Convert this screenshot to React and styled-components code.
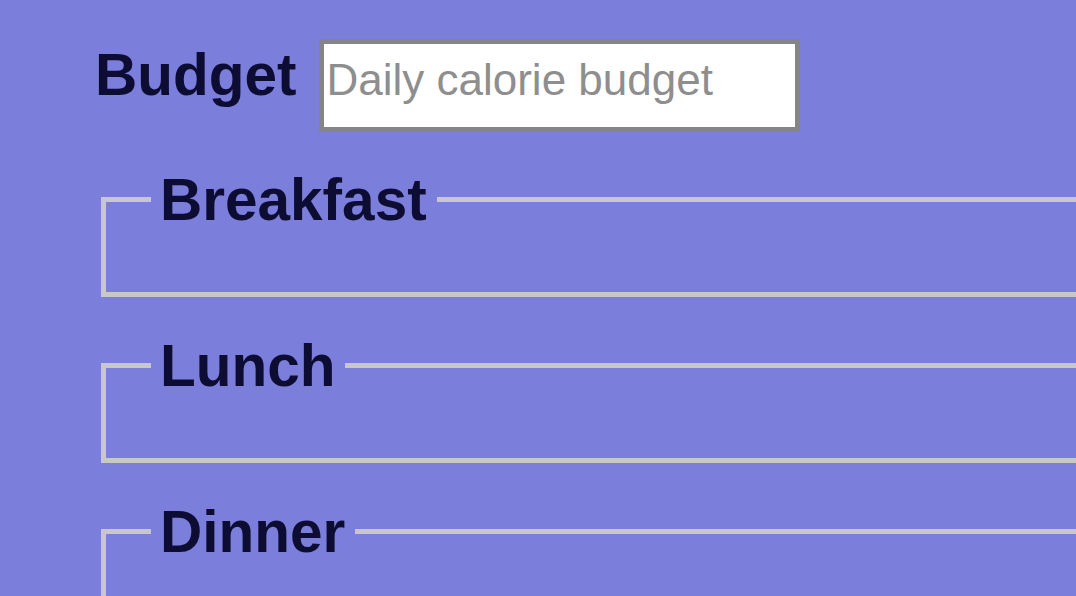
import styled, { createGlobalStyle } from 'styled-components';

const GlobalStyle = createGlobalStyle`
  html, body {
    margin: 0;
    padding: 0;
    background: #7b7edb;
    overflow: hidden;
  }
  body {
    font-family: "Liberation Sans", Arial, sans-serif;
    color: #0d0d33;
  }
`;

const Page = styled.div`
  padding: 39px 0 0 91px;
  width: 1300px;
`;

const BudgetRow = styled.div`
  display: flex;
  align-items: baseline;
  gap: 23px;
  margin-bottom: 34px;
`;

const Label = styled.label`
  margin-left: 4px;
  font-size: 58.5px;
  font-weight: bold;
`;

const BudgetInput = styled.input`
  box-sizing: border-box;
  width: 481px;
  height: 93px;
  border: 5px solid #858585;
  background: #fff;
  padding: 0 4px 12px 2px;
  font-family: "Liberation Sans", Arial, sans-serif;
  font-size: 44px;
  color: #222;
  outline: none;
  &::placeholder {
    color: #8e8e8e;
  }
`;

const Meal = styled.fieldset`
  margin: 0 0 35px 10px;
  border: 5px solid #c8c8c8;
  padding: 0 0 59px 45px;
  min-width: 0;
`;

const MealTitle = styled.legend`
  font-size: 58.5px;
  font-weight: bold;
  padding: 0 10px 0 9px;
`;

const meals = ['Breakfast', 'Lunch', 'Dinner'];

export default function App() {
  return (
    <>
      <GlobalStyle />
      <Page>
        <BudgetRow>
          <Label htmlFor="budget">Budget</Label>
          <BudgetInput id="budget" type="text" placeholder="Daily calorie budget" />
        </BudgetRow>
        {meals.map((m) => (
          <Meal key={m}>
            <MealTitle>{m}</MealTitle>
          </Meal>
        ))}
      </Page>
    </>
  );
}
